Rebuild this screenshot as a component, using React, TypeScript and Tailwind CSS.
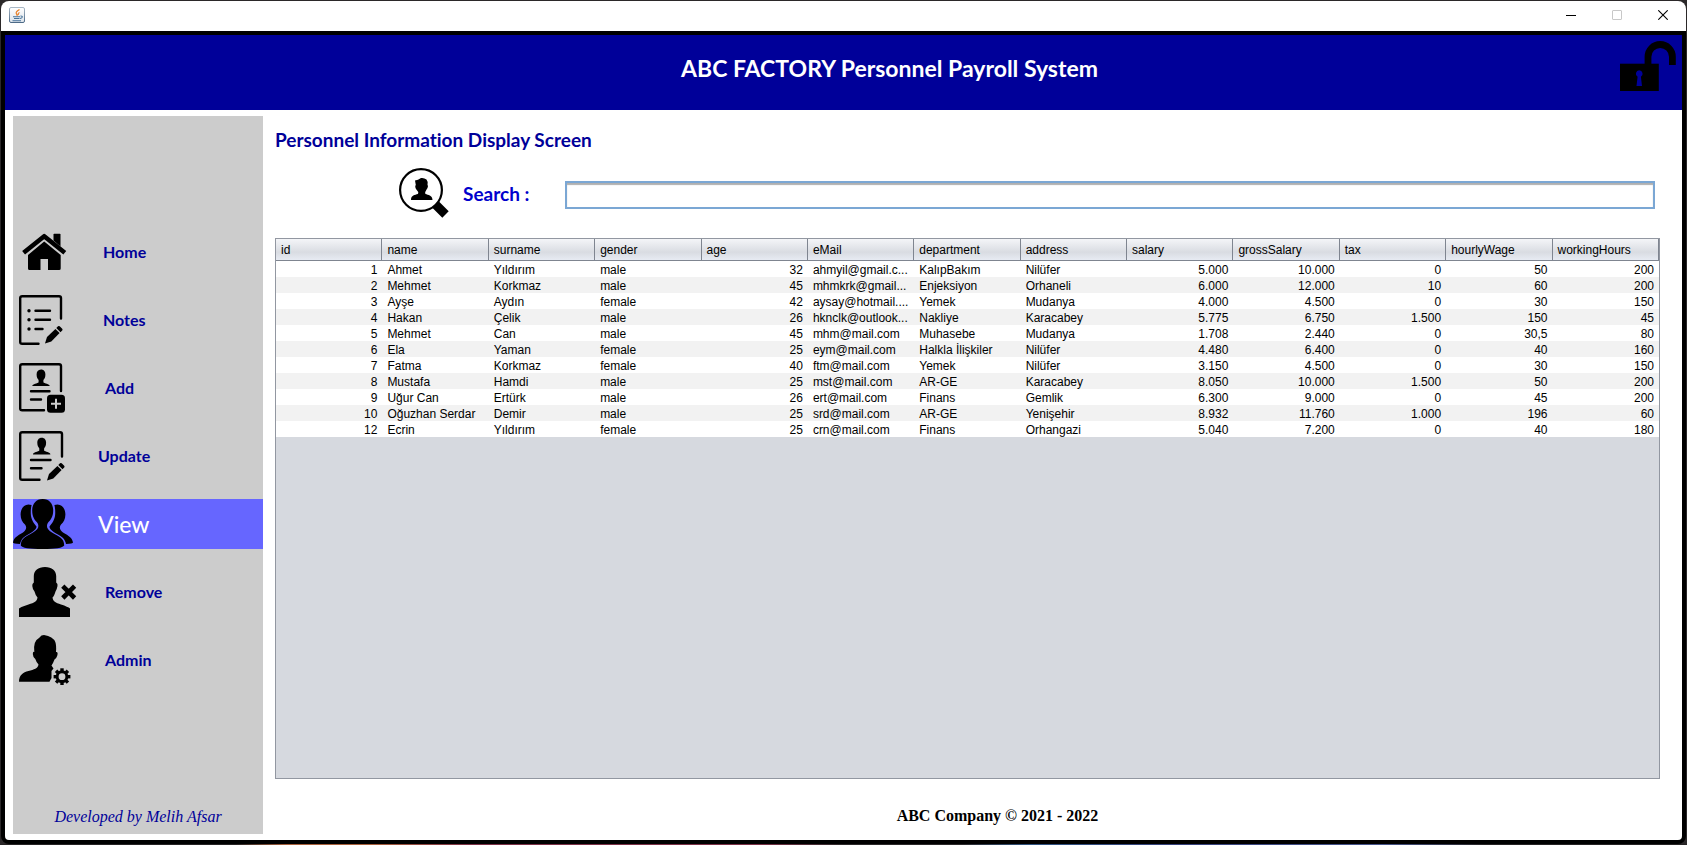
import React from "react";

type IconProps = { className?: string };

const HEAD =
  "M0-6C3-6 4.400-3.800 4.400-1C4.400 2 3.400 3.200 2.400 4.600V6.800C3.200 8.200 8.700 8.200 8.700 10.600H-8.700C-8.700 8.200-3.200 8.200-2.400 6.800V4.600C-3.400 3.200-4.400 2-4.400-1C-4.400-3.800-3-6 0-6Z";

function HomeIcon() {
  return (
    <svg width="50" height="50" viewBox="0 0 50 50" aria-hidden="true">
      <path d="M34.500 7.500q0-.7.700-.7h5.600q.7 0 .7.700V19.500L34.500 13.500Z" />
      <path d="M4.600 25.700 25.200 9.200 45.800 25.700" fill="none" stroke="#000" strokeWidth="4.600" strokeLinejoin="round" />
      <path d="M25.200 14.500 41.700 28V41.500q0 1.500-1.500 1.500H29V32H21.500V43H10.500Q9 43 9 41.500V28Z" />
    </svg>
  );
}

function Pencil({ x, y }: { x: number; y: number }) {
  return (
    <g transform={`translate(${x} ${y})`}>
      <path d="M0 0 2-6.500 10.400-14.600 14.600-10.400 6.300-2Z" />
      <path d="M11.300-15.500 13-17.200Q13.800-18 14.700-17.200L17.200-14.700Q18-13.800 17.200-13L15.500-11.300Z" />
    </g>
  );
}

function NotesIcon() {
  return (
    <svg width="50" height="50" viewBox="0 0 50 50" aria-hidden="true">
      <path
        d="M42 23.500V3Q42 1.200 40 1.200H3.200Q1.200 1.200 1.200 3V47Q1.200 48.800 3.200 48.800H19.500"
        fill="none"
        stroke="#000"
        strokeWidth="2.400"
        strokeLinecap="round"
      />
      <path d="M16.500 15.700H31M16.500 24.700H31M16.500 34H23.500" stroke="#000" strokeWidth="2.400" strokeLinecap="round" />
      <circle cx="10" cy="15.700" r="1.700" />
      <circle cx="10" cy="24.700" r="1.700" />
      <circle cx="10" cy="34" r="1.700" />
      <Pencil x={26} y={48.500} />
    </svg>
  );
}

function AddIcon() {
  return (
    <svg width="50" height="50" viewBox="0 0 50 50" aria-hidden="true">
      <path
        d="M42 28V3Q42 1.200 40 1.200H3.200Q1.200 1.200 1.200 3V45.500Q1.200 47.300 3.200 47.300H25"
        fill="none"
        stroke="#000"
        strokeWidth="2.400"
        strokeLinecap="round"
      />
      <path d={HEAD} transform="translate(22 12.500)" />
      <path d="M12 28.300H30.500M12 36.500H22" stroke="#000" strokeWidth="2.400" strokeLinecap="round" />
      <rect x="28" y="31.800" width="18" height="18" rx="3.500" />
      <path d="M37 35.800V45.800M32 40.800H42" stroke="#ccc" strokeWidth="2" />
    </svg>
  );
}

function UpdateIcon() {
  return (
    <svg width="50" height="50" viewBox="0 0 50 50" aria-hidden="true">
      <path
        d="M43 25.500V3Q43 1.200 41 1.200H3.200Q1.200 1.200 1.200 3V47Q1.200 48.800 3.200 48.800H20.500"
        fill="none"
        stroke="#000"
        strokeWidth="2.400"
        strokeLinecap="round"
      />
      <path d={HEAD} transform="translate(22.700 12.800)" />
      <path d="M12 29H31.500M12 37.300H22.500" stroke="#000" strokeWidth="2.400" strokeLinecap="round" />
      <Pencil x={28} y={49.500} />
    </svg>
  );
}

function ViewIcon() {
  const side =
    "M18.600 6C12 3.600 7.600 9 7.600 15.500C7.600 20 9.500 23.500 12 25.500C14 28 13.500 31 10 33.500C4 37 1 38.500 0 43.500Q0 44.800 7 45C8 40 11 37.500 16 35C21 32 23.500 30 23.500 27.500C21 24.500 18 20.500 17.800 15Q17.600 9.500 18.600 6Z";
  return (
    <svg width="60" height="50" viewBox="0 0 60 50" aria-hidden="true">
      <path d={side} />
      <path d={side} transform="translate(60 0) scale(-1 1)" />
      <path
        d="M29.700 0C36.500 0 40.200 5 40.200 11.500C40.200 18 37.500 21 34.800 24C33 27.500 34 30.500 39 33.500C46 37.500 51.200 39 51.200 46.500Q49 50 29.700 50Q9.500 50 7.800 46.500C7.800 39 13 37.500 20 33.500C25.500 30.500 26.300 27.500 24.500 24C21.700 21 19.200 18 19.200 11.500C19.200 5 23 0 29.700 0Z"
      />
    </svg>
  );
}

function RemoveIcon() {
  return (
    <svg width="58" height="50" viewBox="0 0 58 50" aria-hidden="true">
      <path d="M26 0C33 0 37 3.500 37.200 9V15.500Q39 16.500 38.500 19Q38 22 36.500 24.500C35.500 28 34.500 29.500 33.500 30.500C34 34.500 36.500 35.500 42 37.500Q49 39.800 51 41.500V50H0V41.500Q3 39.500 9.500 37.500C15.500 35.500 18 34.500 18.500 30.500Q16.500 28.500 15.500 24.500Q13.500 22 13.300 19Q13 16.500 14.800 15.500V9C15 3.500 19 0 26 0Z" />
      <path d="M43.800 19.200 55.600 31M55.600 19.200 43.800 31" stroke="#000" strokeWidth="4.600" />
    </svg>
  );
}

function AdminIcon() {
  const teeth = [0, 45, 90, 135, 180, 225, 270, 315];
  return (
    <svg width="52" height="50" viewBox="0 0 52 50" aria-hidden="true">
      <path d="M22.500 0.500L25 0Q34 1.500 36.300 7Q37.500 10 37 17Q39.300 16.500 38.300 20.500Q37.500 23.500 35.500 24.500Q34 28.500 32.500 30.500L34.500 33.500L32.500 36V43L30.500 46.700H0C0 40 4 37.500 9.500 36C15 34.500 19 33.500 19.500 29.500Q17 26.500 16.300 24Q14 22.500 13.800 19Q14 16 15.300 17Q14 6 20 3Z" />
      <circle cx="43" cy="41.700" r="9.500" fill="#ccc" />
      <circle cx="43" cy="41.700" r="4.900" fill="none" stroke="#000" strokeWidth="3" />
      {teeth.map((a) => (
        <rect key={a} x="41.300" y="33.300" width="3.400" height="3.500" transform={`rotate(${a} 43 41.700)`} />
      ))}
    </svg>
  );
}

function LockIcon() {
  return (
    <svg width="56" height="50" viewBox="0 0 56 50" aria-hidden="true">
      <path d="M28 24V15.700A12.200 12.200 0 0 1 52.400 15.700V24" fill="none" stroke="#000" strokeWidth="6.800" />
      <rect x="0" y="22.700" width="38.800" height="27.300" />
      <path d="M19.200 29.300a3.500 3.500 0 0 1 1.700 6.500L22 45H16.500L17.600 35.800A3.500 3.500 0 0 1 19.200 29.300Z" fill="#000099" />
    </svg>
  );
}

function SearchPersonIcon() {
  return (
    <svg width="50" height="50" viewBox="0 0 50 50" aria-hidden="true">
      <circle cx="22" cy="22" r="20.900" fill="none" stroke="#000" strokeWidth="2.200" />
      <path d="M22 10Q25 9.500 27.500 11.500Q29 13 28.500 17Q29.500 17.500 28.500 20Q27.500 21.500 26.800 23C26 24 26 25 26.500 26C29 27 33.300 27 33.500 32H12C12 27 16 27 18.800 26C19.500 25 19.500 24 18.500 23Q17.200 21.500 16.500 20Q15.800 17.500 16.800 17L16 12.500Q19 12 22 10Z" />
      <path d="M36.500 36.500 46.500 46.500" stroke="#000" strokeWidth="9" />
    </svg>
  );
}

function JavaIcon({ className }: IconProps) {
  return (
    <svg width="16" height="16" viewBox="0 0 16 16" className={className} aria-hidden="true">
      <defs>
        <linearGradient id="cup-frame" x1="0" y1="0" x2="0" y2="1">
          <stop offset="0" stopColor="#a9b8c6" />
          <stop offset="1" stopColor="#4d6a87" />
        </linearGradient>
        <linearGradient id="cup-face" x1="0" y1="0" x2="0" y2="1">
          <stop offset="0" stopColor="#ffffff" />
          <stop offset="1" stopColor="#dce3ea" />
        </linearGradient>
      </defs>
      <rect x="0.500" y="0.500" width="15" height="15" rx="1.500" fill="url(#cup-face)" stroke="url(#cup-frame)" />
      <path d="M10.500 2.500Q6 5 7.500 7Q8.500 8 8 9M10.500 5.500Q8.500 6.500 9.500 8" fill="none" stroke="#e8802a" strokeWidth="1.200" />
      <path d="M4 9.700H11M5 11.500H10.500M3.500 13.700H12M11.500 9Q14 8.800 13 10.500Q12.500 11.300 11 11.500" fill="none" stroke="#47739a" strokeWidth="1.100" />
    </svg>
  );
}

const navItems = [
  { label: "Home", Icon: HomeIcon, iconBox: "pl-1.5 w-[90px]" },
  { label: "Notes", Icon: NotesIcon, iconBox: "pl-1.5 w-[90px]" },
  { label: "Add", Icon: AddIcon, iconBox: "pl-1.5 w-[92px]" },
  { label: "Update", Icon: UpdateIcon, iconBox: "pl-1.5 w-[85px]" },
  { label: "View", Icon: ViewIcon, iconBox: "w-[85px]", active: true },
  { label: "Remove", Icon: RemoveIcon, iconBox: "pl-1.5 w-[92px]" },
  { label: "Admin", Icon: AdminIcon, iconBox: "pl-1.5 w-[92px]" },
];

const columns = [
  { name: "id", numeric: true },
  { name: "name" },
  { name: "surname" },
  { name: "gender" },
  { name: "age", numeric: true },
  { name: "eMail" },
  { name: "department" },
  { name: "address" },
  { name: "salary", numeric: true },
  { name: "grossSalary", numeric: true },
  { name: "tax", numeric: true },
  { name: "hourlyWage", numeric: true },
  { name: "workingHours", numeric: true },
];

const rows = [
  ["1", "Ahmet", "Yıldırım", "male", "32", "ahmyil@gmail.c...", "KalıpBakım", "Nilüfer", "5.000", "10.000", "0", "50", "200"],
  ["2", "Mehmet", "Korkmaz", "male", "45", "mhmkrk@gmail...", "Enjeksiyon", "Orhaneli", "6.000", "12.000", "10", "60", "200"],
  ["3", "Ayşe", "Aydın", "female", "42", "aysay@hotmail....", "Yemek", "Mudanya", "4.000", "4.500", "0", "30", "150"],
  ["4", "Hakan", "Çelik", "male", "26", "hknclk@outlook...", "Nakliye", "Karacabey", "5.775", "6.750", "1.500", "150", "45"],
  ["5", "Mehmet", "Can", "male", "45", "mhm@mail.com", "Muhasebe", "Mudanya", "1.708", "2.440", "0", "30,5", "80"],
  ["6", "Ela", "Yaman", "female", "25", "eym@mail.com", "Halkla İlişkiler", "Nilüfer", "4.480", "6.400", "0", "40", "160"],
  ["7", "Fatma", "Korkmaz", "female", "40", "ftm@mail.com", "Yemek", "Nilüfer", "3.150", "4.500", "0", "30", "150"],
  ["8", "Mustafa", "Hamdi", "male", "25", "mst@mail.com", "AR-GE", "Karacabey", "8.050", "10.000", "1.500", "50", "200"],
  ["9", "Uğur Can", "Ertürk", "male", "26", "ert@mail.com", "Finans", "Gemlik", "6.300", "9.000", "0", "45", "200"],
  ["10", "Oğuzhan Serdar", "Demir", "male", "25", "srd@mail.com", "AR-GE", "Yenişehir", "8.932", "11.760", "1.000", "196", "60"],
  ["12", "Ecrin", "Yıldırım", "female", "25", "crn@mail.com", "Finans", "Orhangazi", "5.040", "7.200", "0", "40", "180"],
];

function TitleBar() {
  return (
    <div className="flex h-[30px] items-center justify-between rounded-t-lg bg-white pb-0.5 pl-2 pr-[18px]">
      <JavaIcon />
      <div className="flex items-center gap-9">
        <button type="button" aria-label="Minimize" className="block">
          <svg width="10" height="10" viewBox="0 0 10 10"><path d="M0 5.500H10" stroke="#000" /></svg>
        </button>
        <button type="button" aria-label="Maximize" disabled className="block">
          <svg width="10" height="10" viewBox="0 0 10 10"><rect x="0.500" y="0.500" width="9" height="9" rx="0.500" fill="none" stroke="#c8c8c8" /></svg>
        </button>
        <button type="button" aria-label="Close" className="block">
          <svg width="10" height="10" viewBox="0 0 10 10"><path d="M0.300 0.300 9.700 9.700M9.700 0.300 0.300 9.700" stroke="#000" strokeWidth="1.100" /></svg>
        </button>
      </div>
    </div>
  );
}

function Sidebar() {
  return (
    <aside className="flex w-[250px] shrink-0 flex-col justify-between bg-[#cccccc] pb-[5px] pt-[111px]">
      <nav className="flex flex-col gap-[18px]">
        {navItems.map(({ label, Icon, iconBox, active }) => (
          <button
            key={label}
            type="button"
            aria-current={active ? "page" : undefined}
            className={
              active
                ? "flex h-[50px] items-center bg-[#6666ff] text-[23px] font-medium text-white"
                : "flex h-[50px] items-center text-base font-bold text-[#000099]"
            }
          >
            <span className={`shrink-0 ${iconBox}`}>
              <Icon />
            </span>
            {label}
          </button>
        ))}
      </nav>
      <p className="text-center font-['Liberation_Serif',serif] text-base italic text-[#000099]">Developed by Melih Afsar</p>
    </aside>
  );
}

function PersonnelTable() {
  return (
    <div className="flex-1 border border-[#9297a1] bg-[#d6d9df] font-['Liberation_Sans',sans-serif] text-xs text-black">
      <table className="w-full table-fixed border-collapse">
        <thead>
          <tr className="h-[22px] bg-linear-to-b from-[#f4f5f8] via-[#d9dce2] via-60% to-[#e9edf5] shadow-[inset_0_-1px_0_#6d7482]">
            {columns.map((c) => (
              <th
                key={c.name}
                scope="col"
                className="p-0 pl-[5px] text-left font-normal leading-4 shadow-[inset_-1px_-1px_0_#7f8590]"
              >
                {c.name}
              </th>
            ))}
          </tr>
        </thead>
        <tbody>
          {rows.map((row) => (
            <tr key={row[0]} className="h-4 odd:bg-white even:bg-[#f2f2f2]">
              {row.map((cell, i) => (
                <td
                  key={columns[i].name}
                  className={
                    columns[i].numeric
                      ? "whitespace-nowrap p-0 pt-0.5 pr-[5px] text-right leading-[14px]"
                      : "whitespace-nowrap p-0 pt-0.5 pl-[5px] leading-[14px]"
                  }
                >
                  {cell}
                </td>
              ))}
            </tr>
          ))}
        </tbody>
      </table>
    </div>
  );
}

export default function App() {
  return (
    <div className="flex min-h-screen flex-col bg-[#2b2829] font-['Trebuchet_MS',Lato,sans-serif] [font-variant-ligatures:none]">
      <div className="flex flex-1 flex-col px-px pt-px">
        <TitleBar />
        <div className="flex flex-1 flex-col rounded-b-lg border-4 border-black bg-white">
          <header className="flex h-[75px] items-start bg-[#000099] pr-1.5 pt-1.5">
            <h1 className="flex-1 pl-[154px] pt-[11px] text-center text-[23px] leading-8 font-bold text-white">
              ABC FACTORY Personnel Payroll System
            </h1>
            <button type="button" aria-label="Log out">
              <LockIcon />
            </button>
          </header>
          <div className="flex flex-1 gap-3 py-1.5 pl-2 pr-[22px]">
            <Sidebar />
            <main className="flex min-w-0 flex-1 flex-col">
              <h2 className="pt-3 text-[19px] leading-6 font-bold text-[#000099]">Personnel Information Display Screen</h2>
              <div className="mb-5 mt-4 flex items-center pl-[124px] pr-[5px]">
                <SearchPersonIcon />
                <label htmlFor="search" className="w-[116px] pl-3.5 pt-0.5 text-[19px] leading-6 font-bold text-[#0000cc]">
                  Search :
                </label>
                <input
                  id="search"
                  type="text"
                  className="mt-1 h-[28px] min-w-0 flex-1 border-2 border-[#7ba7d4] bg-white px-1.5 text-xs shadow-[inset_0_2px_1px_#b0b0b0] outline-none"
                />
              </div>
              <PersonnelTable />
              <footer className="flex h-[55px] items-center justify-center pl-[60px] pt-[18px] font-['Liberation_Serif',serif] text-base font-bold text-black">
                ABC Company © 2021 - 2022
              </footer>
            </main>
          </div>
        </div>
      </div>
      <div className="h-px bg-[linear-gradient(to_right,#262324_14%,#a8603c_17%,#a8603c_22%,#7a2f45_28%,#7a2f45_45%,#2b2829_50%,#2b2829_57%,#2f5482_61%,#35407c_70%,#46558c_82%,#262324_88%)]" />
    </div>
  );
}
